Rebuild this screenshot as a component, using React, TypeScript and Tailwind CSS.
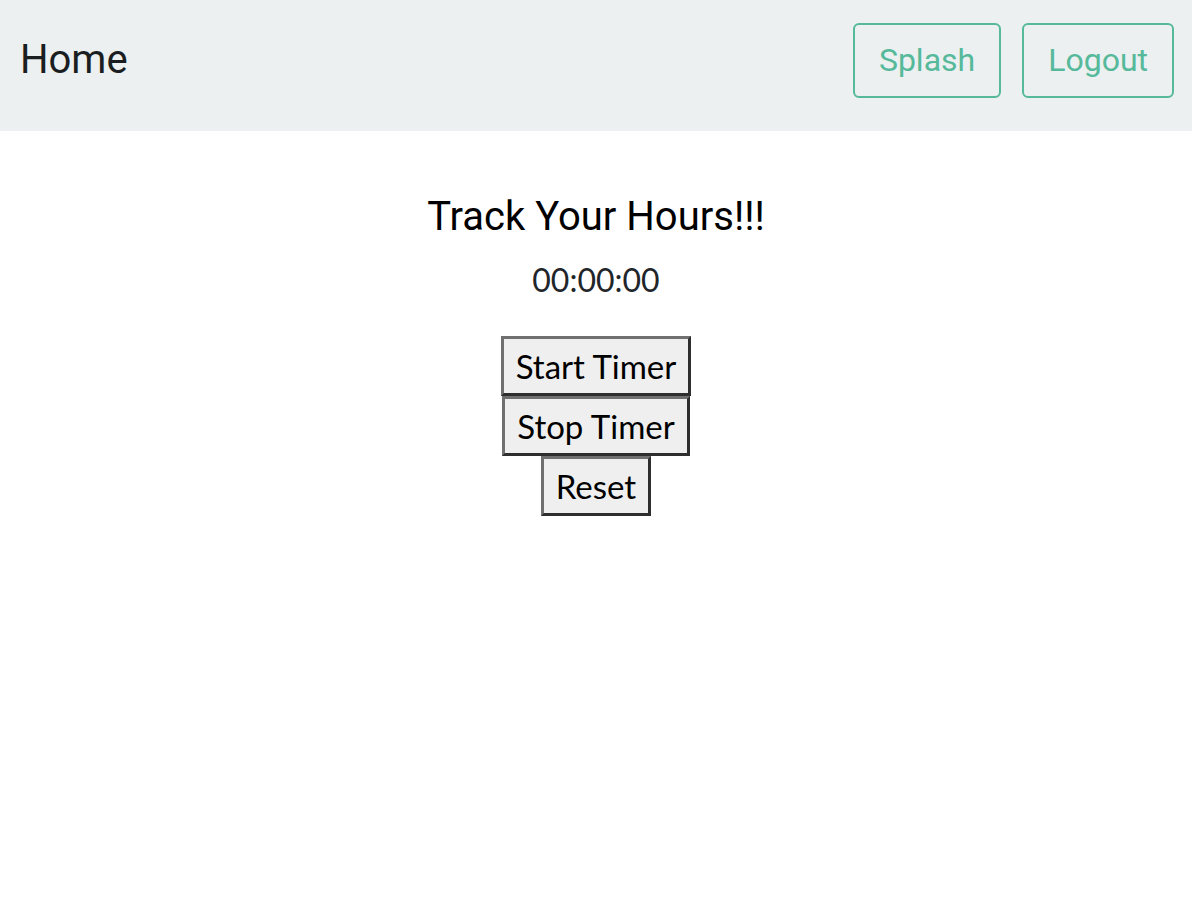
import React from "react";

export default function App() {
  const btn =
    "block bg-[#efefef] text-black text-[33px] leading-[38px] px-[12px] py-[8px] border-[3px] border-t-[#707070] border-l-[#707070] border-b-[#2e2e2e] border-r-[#2e2e2e] [font-family:Lato,sans-serif]";
  return (
    <div className="min-h-[914px] bg-white [font-family:Roboto,sans-serif]">
      <header className="h-[131px] bg-[#ecf0f1] flex items-center justify-between pl-[20px] pr-[18px] pb-[11px]">
        <div className="text-[40px] text-[#1b1e21] leading-none">Home</div>
        <div className="flex gap-[21px]">
          <button className="h-[75px] px-[24px] border-2 border-[#55b99a] rounded-[6px] text-[32px] text-[#55b99a] leading-none">
            Splash
          </button>
          <button className="h-[75px] px-[24px] border-2 border-[#55b99a] rounded-[6px] text-[32px] text-[#55b99a] leading-none">
            Logout
          </button>
        </div>
      </header>
      <main className="flex flex-col items-center">
        <h1 className="mt-[62px] text-[40px] leading-[47px] text-black">Track Your Hours!!!</h1>
        <div className="mt-[21px] text-[32px] leading-[38px] text-[#212529] [font-family:Lato,sans-serif]">
          00:00:00
        </div>
        <div className="mt-[37px] flex flex-col items-center">
          <button className={btn}>Start Timer</button>
          <button className={btn}>Stop Timer</button>
          <button className={btn}>Reset</button>
        </div>
      </main>
    </div>
  );
}
